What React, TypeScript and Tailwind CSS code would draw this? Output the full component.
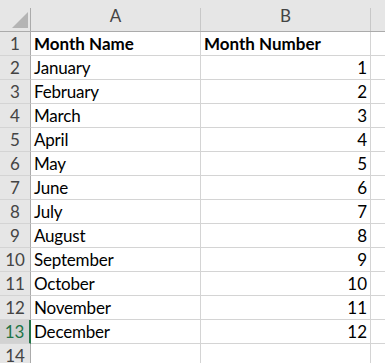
import React from "react";

const rows: [string, string][] = [
  ["January", "1"],
  ["February", "2"],
  ["March", "3"],
  ["April", "4"],
  ["May", "5"],
  ["June", "6"],
  ["July", "7"],
  ["August", "8"],
  ["September", "9"],
  ["October", "10"],
  ["November", "11"],
  ["December", "12"],
];

const font = { fontFamily: "Lato, 'Liberation Sans', sans-serif" };

export default function App() {
  return (
    <div className="w-[385px] h-[363px] overflow-hidden bg-white text-[17px] text-black" style={font}>
      {/* Column header */}
      <div className="flex h-[32px] bg-[#e6e6e6] border-b border-[#ababab]">
        <div className="w-[31px] flex">
          <div className="flex-1 flex items-end justify-end pr-[2px] pb-[3px]">
            <svg width="16" height="16" viewBox="0 0 16 16">
              <polygon points="16,0 16,16 0,16" fill="#b4b4b4" />
            </svg>
          </div>
          <div className="w-px h-[23px] self-end bg-[#ababab]" />
        </div>
        <div className="w-[170px] flex">
          <div className="flex-1 text-center leading-[31px] text-[#444]">A</div>
          <div className="w-px h-[23px] self-end bg-[#c8c8c8]" />
        </div>
        <div className="w-[170px] flex">
          <div className="flex-1 text-center leading-[31px] text-[#444]">B</div>
          <div className="w-px h-[23px] self-end bg-[#c8c8c8]" />
        </div>
        <div className="flex-1" />
      </div>
      {/* Row 1 */}
      <div className="flex h-[24px]">
        <div className="w-[31px] bg-[#e6e6e6] border-r border-b border-r-[#ababab] border-b-[#d4d4d4] text-center leading-[23px] text-[#444]">1</div>
        <div className="w-[170px] border-r border-b border-[#d4d4d4] pl-[3px] leading-[23px] font-bold">Month Name</div>
        <div className="w-[170px] border-r border-b border-[#d4d4d4] pl-[3px] leading-[23px] font-bold">Month Number</div>
        <div className="flex-1 border-b border-[#d4d4d4]" />
      </div>
      {rows.map(([name, num], i) => {
        const selected = i === 11;
        return (
          <div key={name} className="flex h-[24px]">
            {selected ? (
              <div className="w-[31px] bg-[#d2d2d2] border-r-2 border-b border-r-[#217346] border-b-[#d4d4d4] text-center leading-[23px] text-[#217346]">
                {i + 2}
              </div>
            ) : (
              <div className="w-[31px] bg-[#e6e6e6] border-r border-b border-r-[#ababab] border-b-[#d4d4d4] text-center leading-[23px] text-[#444]">
                {i + 2}
              </div>
            )}
            <div className="w-[170px] border-r border-b border-[#d4d4d4] pl-[3px] leading-[23px] tracking-[-0.2px]">{name}</div>
            <div className="w-[170px] border-r border-b border-[#d4d4d4] pr-[3px] text-right leading-[23px]">{num}</div>
            <div className="flex-1 border-b border-[#d4d4d4]" />
          </div>
        );
      })}
      <div className="flex h-[24px]">
        <div className="w-[31px] bg-[#e6e6e6] border-r border-b border-r-[#ababab] border-b-[#d4d4d4] text-center leading-[23px] text-[#444]">14</div>
        <div className="w-[170px] border-r border-b border-[#d4d4d4]" />
        <div className="w-[170px] border-r border-b border-[#d4d4d4]" />
        <div className="flex-1 border-b border-[#d4d4d4]" />
      </div>
    </div>
  );
}
